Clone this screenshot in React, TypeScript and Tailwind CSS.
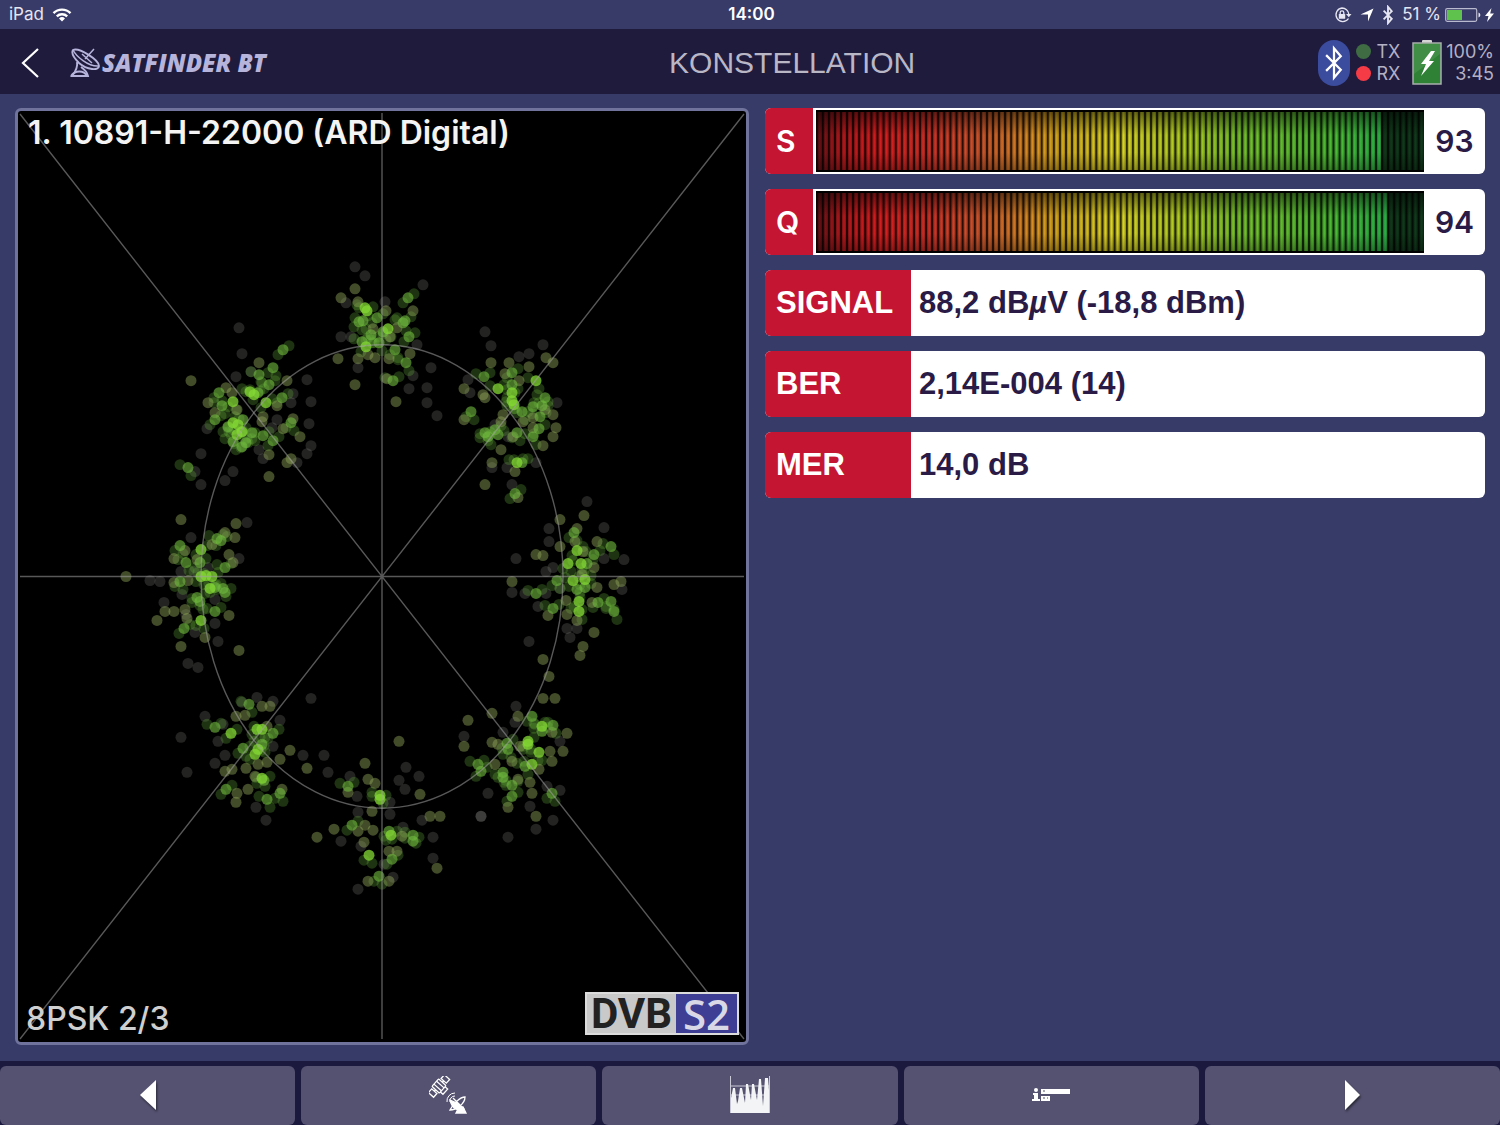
import type { ReactNode } from 'react'

// Received symbols, grouped by how strongly they glow
const symbols = {
  faint:
    '239,328 242,354 236,377 307,380 311,402 293,394 291,403 251,372 207,429 277,420 272,428 309,424 311,446 307,454 297,463 259,450 201,454 195,472 201,485 225,481 233,472 263,459 ' +
    '247,523 191,538 239,559 208,568 181,572 150,581 160,582 164,603 182,595 215,600 215,624 195,633 218,642 188,664 198,668 186,615 194,572 ' +
    '365,276 346,303 351,337 341,337 358,368 355,267 423,285 385,302 417,345 431,368 413,376 409,389 427,388 437,416 427,403 ' +
    '491,346 485,332 543,345 529,354 519,357 468,380 470,393 557,403 536,463 507,468 512,485 495,425 508,437 492,468 ' +
    '587,502 604,528 549,529 549,542 516,559 624,560 604,559 553,568 546,572 546,594 525,594 512,593 622,590 538,607 570,638 529,642 567,629 577,629 560,589 ' +
    '516,707 464,737 515,723 503,733 560,742 560,791 488,794 481,817 481,817 553,821 536,830 508,838 530,807 547,787 ' +
    '311,699 257,698 273,702 205,717 280,721 223,725 218,742 181,738 273,747 225,756 215,764 187,773 303,756 324,756 328,773 256,808 266,821 242,703 ' +
    '406,768 399,781 419,777 405,790 350,777 357,797 358,813 390,803 390,815 422,821 341,842 433,838 433,859 403,828 361,847 384,865 393,878 358,890',
  dim:
    '191,381 259,363 287,381 277,406 208,403 226,388 283,429 300,437 287,463 291,459 269,455 269,477 293,419 263,417 262,422 232,393 237,410 215,413 ' +
    '181,520 236,524 225,533 235,538 212,545 185,551 174,559 229,555 233,563 197,560 126,577 174,583 188,581 174,612 165,612 185,610 229,616 157,621 187,619 205,638 181,647 239,651 ' +
    '355,289 341,298 358,302 413,311 386,311 373,329 390,337 338,359 358,359 375,358 368,355 355,385 410,354 389,359 387,379 396,402 397,328 ' +
    '491,363 509,363 529,367 546,358 553,363 505,374 519,381 464,389 483,395 485,398 464,420 553,415 503,415 501,422 556,428 553,437 543,446 501,450 492,463 515,472 485,485 518,498 545,410 533,418 523,422 533,428 513,437 ' +
    '584,516 560,520 577,529 597,542 575,542 560,547 583,552 536,555 543,556 594,568 512,582 582,575 621,582 614,585 597,588 566,601 548,616 567,615 577,621 594,633 583,647 580,656 543,660 592,603 ' +
    '549,677 543,699 555,699 492,714 468,721 518,717 464,747 567,734 552,733 550,752 563,752 552,762 498,745 492,743 512,762 495,765 518,780 530,783 539,770 532,794 508,808 536,817 520,747 ' +
    '262,707 270,707 236,717 245,716 267,727 232,770 225,772 246,769 258,765 267,763 280,760 290,751 307,769 237,794 248,790 282,790 236,803 255,777 ' +
    '399,742 365,764 368,780 375,784 348,793 372,812 430,817 440,817 358,832 334,830 317,838 365,826 373,831 402,837 389,852 397,852 437,869 368,882 389,882 364,843 420,795',
  mid:
    '283,350 273,368 259,375 269,385 282,398 219,393 222,406 258,393 215,420 228,427 233,442 242,447 246,443 252,433 243,420 263,436 273,441 291,423 188,468 ' +
    '217,539 221,541 180,546 186,563 225,568 200,563 180,582 223,589 225,593 215,588 197,598 200,602 215,612 184,629 ' +
    '359,322 363,321 362,342 408,298 383,332 403,323 405,321 409,337 395,350 406,363 393,381 377,318 371,335 379,343 ' +
    '484,377 512,373 512,385 545,398 542,406 533,407 471,412 522,412 540,417 539,429 485,433 488,437 498,435 495,430 517,433 533,437 522,463 515,494 ' +
    '574,533 611,547 594,555 587,564 557,581 577,590 536,594 598,603 611,602 614,612 553,609 585,588 ' +
    '532,717 553,726 542,732 507,744 508,750 525,767 478,765 481,772 503,773 503,778 512,786 512,797 552,794 ' +
    '249,705 215,728 273,734 243,749 262,745 264,781 226,790 280,794 267,800 ' +
    '348,787 352,826 389,832 413,836 413,842 392,860 379,877',
  bright:
    '266,403 233,402 250,392 254,395 233,423 238,425 242,432 237,435 201,550 201,577 206,576 212,577 210,589 201,621 365,308 367,311 366,347 388,329 ' +
    '536,381 498,389 512,393 512,401 514,405 517,463 577,551 568,564 581,564 573,581 585,580 579,602 579,612 542,727 528,742 528,745 539,753 532,765 ' +
    '231,734 257,730 262,730 258,750 255,755 262,779 380,796 380,800 391,836 369,856',
}

type Level = keyof typeof symbols

const glow = {
  faint: 'fill-[#8c8c86]/25',
  dim: 'fill-[#93a85a]/45',
  mid: 'fill-[#72bc40]/60',
  bright: 'fill-[#84da34]/75',
}

// Where the decaying earlier symbols sit around a strong one
const trail = [
  [6, -4],
  [-5, 5],
  [3, 8],
  [-8, -3],
]

function positions(level: Level) {
  return symbols[level].split(' ').map((point) => point.split(',').map(Number))
}

function Symbols({ level }: { level: Level }) {
  return (
    <g className={glow[level]}>
      {positions(level).map(([x, y], i) => (
        <circle key={i} cx={x} cy={y} r="5.5" />
      ))}
    </g>
  )
}

function Afterglow({ level }: { level: Level }) {
  return (
    <g className="fill-[#62a838]/30">
      {positions(level).map(([x, y], i) => {
        const [dx, dy] = trail[i % trail.length]
        const [ex, ey] = trail[(i + 1) % trail.length]
        return (
          <g key={i}>
            <circle cx={x + dx} cy={y + dy} r="5.5" />
            <circle cx={x + ex} cy={y + ey} r="5.5" />
          </g>
        )
      })}
    </g>
  )
}

function Constellation() {
  return (
    <svg
      viewBox="18 111 728 932"
      preserveAspectRatio="none"
      className="absolute inset-0 w-full h-full"
      role="img"
      aria-label="8PSK"
    >
      <Symbols level="faint" />
      <Afterglow level="mid" />
      <Afterglow level="bright" />
      <Symbols level="dim" />
      <Symbols level="mid" />
      <Symbols level="bright" />
      <g fill="none" stroke="#a3a0a3" strokeOpacity="0.55" strokeWidth="1.4">
        <path d="M20 577H744M382 113V1040M20 114L744 1040M744 114L20 1040" />
        <ellipse cx="382" cy="577" rx="181" ry="232" />
      </g>
    </svg>
  )
}

function BluetoothIcon({ className }: { className: string }) {
  return (
    <svg viewBox="0 0 16 32" fill="none" stroke="currentColor" className={className}>
      <path d="M1 9l13 13-6 7V3l6 7L1 23" strokeLinejoin="miter" />
    </svg>
  )
}

function StatusBar() {
  return (
    <div className="h-[29px] grid grid-cols-3 items-center bg-[#383b67] pl-[9px] pr-[6px] text-[17px] text-[#e6e5f2]">
      <div className="flex items-center gap-2">
        <span>iPad</span>
        <svg viewBox="0 0 20 14" className="w-5 h-[14px]" fill="none" stroke="white" strokeWidth="2.4">
          <path d="M1.5 5.2a12 12 0 0117 0M4.8 8.4a7.400 7.400 0 0110.400 0" />
          <path d="M10 13.500L7 10.400a4.300 4.300 0 016 0z" fill="white" stroke="none" />
        </svg>
      </div>
      <div className="text-center font-semibold text-white">14:00</div>
      <div className="flex items-center justify-end gap-1">
        <svg viewBox="0 0 18 18" className="w-[18px] h-[18px] mr-1" fill="none" stroke="currentColor" strokeWidth="1.300">
          <path d="M14.500 12.500A6.800 6.800 0 118 2a6.800 6.800 0 016.800 6" />
          <path d="M12 8h5.500l-2.700 3.200z" fill="currentColor" stroke="none" />
          <rect x="4.800" y="8" width="6.400" height="4.800" rx="0.600" fill="currentColor" stroke="none" />
          <path d="M6.200 8V6.600a1.800 1.800 0 013.600 0V8" />
        </svg>
        <svg viewBox="0 0 14 14" className="w-[14px] h-[14px] mr-1" fill="white">
          <path d="M13.500 0.500L8 13.500V6.500H0.500z" />
        </svg>
        <BluetoothIcon className="w-3 h-5 mr-1 stroke-3" />
        <span>51 %</span>
        <svg viewBox="0 0 36 14" className="w-9 h-[14px]">
          <rect x="0.700" y="0.700" width="31" height="12.600" rx="1.500" fill="none" stroke="#b9b9cf" strokeWidth="1.200" />
          <rect x="2" y="2" width="15" height="10" fill="#5fc24c" />
          <path d="M33.500 4.500v5a2.600 2.600 0 000-5z" fill="#e6e5f2" />
        </svg>
        <svg viewBox="0 0 9 14" className="w-[9px] h-[14px]" fill="white">
          <path d="M6.500 0L0 8h3.500L2 14l7-8.500H5.200z" />
        </svg>
      </div>
    </div>
  )
}

function Header() {
  return (
    <header className="h-[65px] flex items-center bg-[#1f1b3d] pt-[2px] pl-[20px] pr-[6px]">
      <div className="flex items-center">
        <button type="button" aria-label="Back" className="mr-[30px]">
          <svg viewBox="0 0 20 30" className="w-5 h-[30px]" fill="none" stroke="white" strokeWidth="2.200">
            <path d="M18 1L3 15l15 14" />
          </svg>
        </button>
        <svg viewBox="0 0 32 32" className="w-8 h-8" fill="none" stroke="#b7b4dc" strokeWidth="1.900">
          <path d="M3 3C9 0 29 13 29 19C29 24 17 23 9 16C4 11 1 6 3 3z" />
          <path d="M3 3C6 9 18 20 29 19M15 12l9-10M12 7l10 9" strokeWidth="1.500" />
          <path d="M7 15C8 20 6 24 2 29H18C17 25 14 22 11 20" />
          <path d="M1 29C5 23 14 23 17 29" />
        </svg>
        <span className="font-['Open_Sans'] italic font-extrabold text-2xl text-[#b7b4dc]">SATFINDER BT</span>
      </div>
      <h1 className="flex-1 text-center font-['Liberation_Sans'] text-[30px] text-[#b9b7c6]">KONSTELLATION</h1>
      <div className="flex items-center">
        <div className="w-8 h-[46px] rounded-full bg-[#3b4b9d] flex items-center justify-center text-white">
          <BluetoothIcon className="w-[18px] h-[36px] stroke-2" />
        </div>
        <div className="ml-[6px] flex flex-col text-lg leading-[22px] text-[#b3b1c4]">
          <div className="flex items-center gap-[5px]">
            <span className="w-[15px] h-[15px] rounded-full bg-[#3f6c43]" />
            TX
          </div>
          <div className="flex items-center gap-[5px]">
            <span className="w-[15px] h-[15px] rounded-full bg-[#f53c46]" />
            RX
          </div>
        </div>
        <svg viewBox="0 0 30 45" className="w-[30px] h-[45px] ml-3 mr-1">
          <rect x="10" y="0" width="10" height="4" rx="1" fill="#d5d5d5" />
          <rect x="1" y="3" width="28" height="41" fill="#2f8136" stroke="#a9b0ac" strokeWidth="1.500" />
          <path d="M2 4h26v10L2 34z" fill="#4e9752" fillOpacity="0.600" />
          <path d="M19 11L9 24h5l-5 12 13-15h-5l6-10z" fill="white" />
        </svg>
        <div className="flex flex-col items-end text-lg leading-[22px] text-[#b3b1c4]">
          <span>100%</span>
          <span>3:45</span>
        </div>
      </div>
    </header>
  )
}

function Gauge({ label, value }: { label: string; value: number }) {
  return (
    <div className="h-[66px] flex rounded-md overflow-hidden bg-white">
      <div className="w-12 pl-[11px] flex items-center bg-[#c41532] text-white text-3xl font-semibold">{label}</div>
      <div
        role="meter"
        aria-label={label}
        aria-valuenow={value}
        aria-valuemin={0}
        aria-valuemax={100}
        className="flex-1 my-[2px] ml-[3px] relative bg-[linear-gradient(90deg,#5c1014_0%,#b3191c_4%,#d41c1e_10%,#d02f26_18%,#cf552b_27%,#d98a24_35%,#d9b21c_41%,#ddd824_50%,#b2ce23_60%,#76c42c_70%,#4cbc34_85%,#27b44b_95%)]"
      >
        <div className="absolute inset-y-0 right-0 bg-[#0d2413]/85" style={{ width: `${100 - value}%` }} />
        {/* segment gaps, then the shading along the top and bottom edges */}
        <div className="absolute inset-0 bg-[repeating-linear-gradient(90deg,rgba(0,0,0,0.8)_0%,rgba(0,0,0,0.8)_0.2%,rgba(0,0,0,0.25)_0.35%,rgba(0,0,0,0)_0.6%,rgba(0,0,0,0.25)_0.9%,rgba(0,0,0,0.8)_1%)]" />
        <div className="absolute inset-0 border-y-2 border-black bg-[linear-gradient(180deg,rgba(0,0,0,0.5)_0%,rgba(0,0,0,0)_40%,rgba(0,0,0,0)_70%,rgba(0,0,0,0.3)_100%)]" />
      </div>
      <div className="w-[61px] flex items-center justify-center text-3xl font-semibold text-[#291b46]">{value}</div>
    </div>
  )
}

function Reading({ label, children }: { label: string; children: ReactNode }) {
  return (
    <div className="h-[66px] flex rounded-md overflow-hidden bg-white font-['Liberation_Sans'] font-bold text-[31px]">
      <dt className="w-[146px] pl-[11px] flex items-center bg-[#c41532] text-white">{label}</dt>
      <dd className="pl-2 flex items-center whitespace-pre text-[#291b46]">{children}</dd>
    </div>
  )
}

const tabs = [
  {
    name: 'Previous',
    icon: (
      <svg viewBox="0 0 40 40" className="w-10 h-10 drop-shadow-[1px_2px_1px_rgba(0,0,0,0.5)]" fill="white">
        <path d="M28 4v30L12 19z" />
      </svg>
    ),
  },
  {
    name: 'Satellite',
    icon: (
      <svg viewBox="0 0 40 40" className="w-10 h-10" fill="none" stroke="white" strokeWidth="1.300">
        <g transform="translate(10 10) rotate(-48)">
          <rect x="-12" y="-3.500" width="5" height="7" />
          <path d="M-7 0h2M5 0h2M-2 -5v10M2 -5v10" />
          <rect x="-5" y="-5" width="10" height="10" rx="1" />
          <rect x="7" y="-3.500" width="5" height="7" />
          <path d="M-3.500 5v3.500h7V5" />
        </g>
        <path d="M18 26a8 8 0 018-9M21 26a5 5 0 015-6" strokeWidth="1" />
        <path d="M21 24C23 33 30 36 35 33L30 28z" fill="white" />
        <path d="M36 21C31 21 24 28 21 34C27 34 36 28 36 21zM24 22l6 6" />
        <path d="M30 31h4l3 6H27z" fill="white" />
      </svg>
    ),
  },
  {
    name: 'Spectrum',
    icon: (
      <svg viewBox="0 0 40 40" className="w-10 h-10">
        <path d="M0.500 0v37M39.500 0v37M0 10h40M0 19h40" stroke="#c9c8d6" />
        <path
          d="M1 37V22L3 12h2l2 16 1-3L10 12h2l3 15L16 8h2l3 16L22 8h2l3 16L29 3h2l2 27L35 2h3l1 12v23z"
          fill="#f3f4f5"
        />
      </svg>
    ),
  },
  {
    name: 'Info',
    icon: (
      <svg viewBox="0 0 40 40" className="w-10 h-10" fill="white">
        <circle cx="5" cy="14" r="2" />
        <path d="M2 17h5v6h2v2H1v-2h2v-4H2zM10 13h29v5H10zM10 20h9v5h-9z" />
        <path d="M12 15h2M12 22h2M16 22h1" stroke="#545270" />
      </svg>
    ),
  },
  {
    name: 'Next',
    icon: (
      <svg viewBox="0 0 40 40" className="w-10 h-10 drop-shadow-[1px_2px_1px_rgba(0,0,0,0.5)]" fill="white">
        <path d="M13 4v30l15-15z" />
      </svg>
    ),
  },
]

export default function App() {
  return (
    <div className="min-h-screen flex flex-col bg-[#373b67] font-['Inter',sans-serif]">
      <StatusBar />
      <Header />

      <main className="flex-1 grid grid-cols-[734fr_720fr] gap-4 px-[15px] pt-[14px] pb-4">
        <section className="relative flex flex-col justify-between rounded-md overflow-hidden border-[3px] border-[#70739c] bg-black">
          <Constellation />
          <h2 className="relative pl-[10px] pt-1 text-[32px] leading-9 font-semibold text-[#f4f4f4]">
            1. 10891-H-22000 (ARD Digital)
          </h2>
          <div className="relative flex items-end justify-between pl-2 pr-[7px] pb-[7px]">
            <span className="text-[32px] leading-8 font-medium text-[#cfcfcf]">8PSK 2/3</span>
            <div className="h-[43px] flex items-stretch border-2 border-[#dcdcdc] bg-[#c9c9c9] leading-10">
              <span className="w-[89px] flex items-center justify-center font-['Roboto'] font-bold text-[42px] text-[#222]">
                DVB
              </span>
              <span className="w-[61px] flex items-center justify-center bg-[#3d3e94] font-['Open_Sans'] font-semibold text-[42px] text-[#d8d8e6]">
                S2
              </span>
            </div>
          </div>
        </section>

        <section className="flex flex-col gap-[15px]">
          <Gauge label="S" value={93} />
          <Gauge label="Q" value={94} />
          <dl className="flex flex-col gap-[15px]">
            <Reading label="SIGNAL">
              88,2 dB<i>µ</i>V (-18,8 dBm)
            </Reading>
            <Reading label="BER">2,14E-004 (14)</Reading>
            <Reading label="MER">14,0 dB</Reading>
          </dl>
        </section>
      </main>

      <nav className="h-16 pt-[5px] grid grid-cols-5 gap-[6px] bg-[#1c193f]">
        {tabs.map((tab) => (
          <button
            key={tab.name}
            type="button"
            aria-label={tab.name}
            className="flex items-center justify-center rounded-md bg-[#545270]"
          >
            {tab.icon}
          </button>
        ))}
      </nav>
    </div>
  )
}
